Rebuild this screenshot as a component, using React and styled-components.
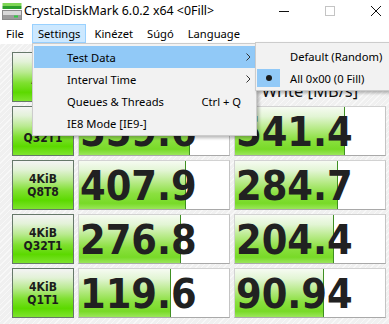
import React from "react";
import styled, { createGlobalStyle } from "styled-components";

const GlobalStyle = createGlobalStyle`
  html, body { margin: 0; padding: 0; background: #fff; }
  * { box-sizing: border-box; }
`;

const UI_FONT = `"Noto Sans", "Liberation Sans", sans-serif`;
const BOLD_FONT = `"DejaVu Sans Condensed", "DejaVu Sans", sans-serif`;

const Window = styled.div`
  width: 389px;
  height: 324px;
  overflow: hidden;
  position: relative;
  display: flex;
  flex-direction: column;
  background: #fff;
  font-family: ${UI_FONT};
  font-size: 11px;
  color: #000;
`;

const TitleBar = styled.div`
  height: 23px;
  display: flex;
  align-items: center;
  padding-left: 2px;
  background: #fff;
`;

const Title = styled.div`
  flex: 1;
  margin-left: 2px;
  white-space: nowrap;
  font-size: 12.4px;
  line-height: 23px;
  padding-bottom: 2px;
`;

const Controls = styled.div`
  display: flex;
  margin-right: -10px;
  height: 23px;
`;

const CaptionButton = styled.div`
  width: 46px;
  height: 23px;
  display: flex;
  align-items: center;
  justify-content: center;
  padding-bottom: 2px;
`;

const MenuBar = styled.div`
  height: 21px;
  display: flex;
  align-items: center;
  gap: 2px;
  background: #fff;
`;

const MenuItem = styled.div`
  height: 19px;
  line-height: 17px;
  padding: 0 5px;
  font-size: 11.2px;
  border: 1px solid ${(p) => (p.$active ? "#99d1ff" : "transparent")};
  background: ${(p) => (p.$active ? "#cce8ff" : "transparent")};
  white-space: nowrap;
`;

const Body = styled.div`
  flex: 1;
  padding: 8px 0 0 12px;
  background-color: #f2f2f2;
  background-image: repeating-linear-gradient(
    135deg,
    #f8f8f8 0px,
    #f8f8f8 1px,
    #f0f0f0 1px,
    #f0f0f0 4px
  );
`;

const Grid = styled.div`
  display: grid;
  grid-template-columns: 62px 152px 152px;
  grid-template-rows: repeat(5, 50px);
  column-gap: 4px;
  row-gap: 4px;
`;

const GreenButton = styled.div`
  border: 1px solid #66786a;
  background: linear-gradient(
    to bottom,
    #f4f4f4 0%,
    #e3f2d8 18%,
    #b9ea90 40%,
    #7fe030 62%,
    #5cd900 82%,
    #7ee42e 100%
  );
  display: flex;
  flex-direction: column;
  align-items: center;
  justify-content: center;
  font-family: ${BOLD_FONT};
  font-weight: bold;
  font-size: 12px;
  line-height: 13px;
  color: #1c1c1c;
  text-align: center;
  padding-top: 1px;
`;

const AllText = styled.span`
  font-size: 18px;
  line-height: 20px;
`;

const TopPanel = styled.div`
  grid-column: 2 / 4;
  display: grid;
  grid-template-columns: 152px 152px;
  grid-template-rows: 22px 1fr;
  column-gap: 4px;
  row-gap: 6px;
`;

const ComboRow = styled.div`
  grid-column: 1 / 3;
  display: grid;
  grid-template-columns: 44px 70px 1fr;
  gap: 4px;
`;

const Combo = styled.div`
  border: 1px solid #adadad;
  background: linear-gradient(#f2f2f2, #e5e5e5);
  display: flex;
  align-items: center;
  padding: 0 4px;
  font-size: 12px;
`;

const Header = styled.div`
  text-align: center;
  font-size: 16.5px;
  line-height: 21px;
  color: #111;
  white-space: nowrap;
`;

const ValueBox = styled.div`
  display: grid;
  grid-template-columns: 1fr;
  grid-template-rows: 1fr;
  background: #fff;
  border: 1px solid;
  border-color: #d2d2d2 #c4c4c4 #a9a9a9 #d2d2d2;
  overflow: hidden;
`;

const Bar = styled.div`
  grid-area: 1 / 1;
  height: 100%;
  border-right: 1px solid #3f8f22;
  background: linear-gradient(
    to bottom,
    #f6fbf2 0%,
    #e2f5d4 20%,
    #b6ea86 45%,
    #8be040 68%,
    #78da28 88%,
    #9ae65a 100%
  );
`;

const Value = styled.div`
  grid-area: 1 / 1;
  padding: 3px 0 0 1px;
  font-family: ${BOLD_FONT};
  font-weight: bold;
  font-size: 41px;
  line-height: 45px;
  color: #212121;
  white-space: nowrap;
`;

const Popup = styled.div`
  position: absolute;
  left: ${(p) => p.$left}px;
  top: ${(p) => p.$top}px;
  width: ${(p) => p.$width}px;
  background: #f2f2f2;
  border: 1px solid #cccccc;
  padding: 2px 1px 1px;
  box-shadow: 2px 2px 3px rgba(0, 0, 0, 0.28);
  font-size: 11.2px;
  z-index: 10;
`;

const PopupItem = styled.div`
  height: 22px;
  display: grid;
  grid-template-columns: 33px 1fr auto 14px;
  align-items: center;
  background: ${(p) => (p.$hl ? "#91c9f7" : "transparent")};
  white-space: nowrap;
  color: #000;
`;

const SubItem = styled.div`
  height: 22px;
  display: grid;
  grid-template-columns: 33px 1fr;
  align-items: center;
  white-space: nowrap;
`;

const CheckCell = styled.div`
  height: 18px;
  width: 23px;
  display: flex;
  align-items: center;
  justify-content: center;
  background: ${(p) => (p.$on ? "#91c9f7" : "transparent")};
`;

const Dot = styled.div`
  width: 6px;
  height: 6px;
  border-radius: 50%;
  background: #1a1a1a;
`;

const Shortcut = styled.span`
  padding-right: 0px;
`;

const ArrowCell = styled.div`
  display: flex;
  justify-content: flex-start;
  padding-left: 5px;
`;

const AppIcon = () => (
  <svg width="20" height="17" viewBox="0 0 20 17">
    <rect x="0.5" y="0" width="19" height="3" fill="#7fd656" />
    <rect x="0.5" y="3" width="19" height="3" fill="#2b9e2b" />
    <rect x="0.5" y="7.5" width="19" height="9" fill="#d9d9d9" stroke="#8a8a8a" />
    <rect x="1" y="12" width="18" height="4" fill="#9c9c9c" />
    <rect x="12" y="12.5" width="4" height="2" fill="#2ecc40" />
  </svg>
);

const Chevron = () => (
  <svg width="5" height="8" viewBox="0 0 5 8">
    <path d="M0.5 0.5 L4 4 L0.5 7.5" fill="none" stroke="#333" strokeWidth="1" />
  </svg>
);

const rows = [
  { a: "Seq", b: "Q32T1", r: 559.6, w: 541.4 },
  { a: "4KiB", b: "Q8T8", r: 407.9, w: 284.7 },
  { a: "4KiB", b: "Q32T1", r: 276.8, w: 204.4 },
  { a: "4KiB", b: "Q1T1", r: 119.6, w: 90.94 },
];

const barWidth = (v) => Math.round(107 + 28.2 * (Math.log10(v) - Math.log10(407.9)));

const fmt = (v) => (v < 100 ? v.toFixed(2) : v.toFixed(1));

export default function App() {
  return (
    <>
      <GlobalStyle />
      <Window>
        <TitleBar>
          <AppIcon />
          <Title>CrystalDiskMark 6.0.2 x64 &lt;0Fill&gt;</Title>
          <Controls>
            <CaptionButton>
              <svg width="10" height="10" viewBox="0 0 10 10">
                <line x1="0" y1="5.5" x2="10" y2="5.5" stroke="#111" strokeWidth="1" />
              </svg>
            </CaptionButton>
            <CaptionButton>
              <svg width="10" height="10" viewBox="0 0 10 10">
                <rect x="0.5" y="0.5" width="9" height="9" fill="none" stroke="#c4c4c4" strokeWidth="1" />
              </svg>
            </CaptionButton>
            <CaptionButton>
              <svg width="10" height="10" viewBox="0 0 10 10">
                <path d="M0 0 L10 10 M10 0 L0 10" stroke="#111" strokeWidth="1" />
              </svg>
            </CaptionButton>
          </Controls>
        </TitleBar>
        <MenuBar>
          <MenuItem>File</MenuItem>
          <MenuItem $active>Settings</MenuItem>
          <MenuItem>Kinézet</MenuItem>
          <MenuItem>Súgó</MenuItem>
          <MenuItem>Language</MenuItem>
        </MenuBar>
        <Body>
          <Grid>
            <GreenButton>
              <AllText>All</AllText>
            </GreenButton>
            <TopPanel>
              <ComboRow>
                <Combo>5</Combo>
                <Combo>1GiB</Combo>
                <Combo>C: 12% (14/119GiB)</Combo>
              </ComboRow>
              <Header>Read [MB/s]</Header>
              <Header>Write [MB/s]</Header>
            </TopPanel>
            {rows.map((row, i) => (
              <React.Fragment key={i}>
                <GreenButton>
                  <span>{row.a}</span>
                  <span>{row.b}</span>
                </GreenButton>
                <ValueBox>
                  <Bar style={{ width: barWidth(row.r) }} />
                  <Value>{fmt(row.r)}</Value>
                </ValueBox>
                <ValueBox>
                  <Bar style={{ width: barWidth(row.w) }} />
                  <Value>{fmt(row.w)}</Value>
                </ValueBox>
              </React.Fragment>
            ))}
          </Grid>
        </Body>

        <Popup $left={32} $top={43} $width={225}>
          <PopupItem $hl>
            <span />
            <span>Test Data</span>
            <span />
            <ArrowCell>
              <Chevron />
            </ArrowCell>
          </PopupItem>
          <PopupItem>
            <span />
            <span>Interval Time</span>
            <span />
            <ArrowCell>
              <Chevron />
            </ArrowCell>
          </PopupItem>
          <PopupItem>
            <span />
            <span>Queues &amp; Threads</span>
            <Shortcut>Ctrl + Q</Shortcut>
            <span />
          </PopupItem>
          <PopupItem>
            <span />
            <span>IE8 Mode [IE9-]</span>
            <span />
            <span />
          </PopupItem>
        </Popup>

        <Popup $left={255} $top={42} $width={150}>
          <SubItem>
            <CheckCell />
            <span>Default (Random)</span>
          </SubItem>
          <SubItem>
            <CheckCell $on>
              <Dot />
            </CheckCell>
            <span>All 0x00 (0 Fill)</span>
          </SubItem>
        </Popup>
      </Window>
    </>
  );
}
